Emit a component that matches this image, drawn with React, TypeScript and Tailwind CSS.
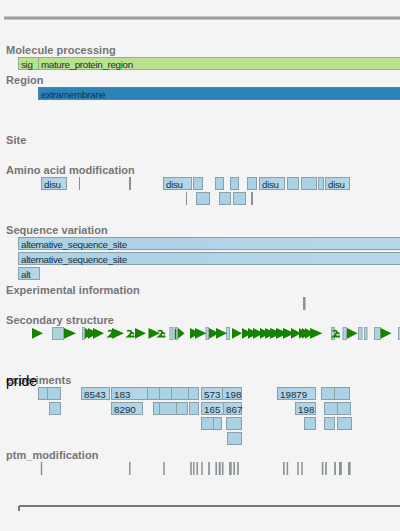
import React from "react";

// [start, end, label?] in canvas pixels
type Feature = [number, number, string?];
type Tone = "blue" | "green" | "deep";

const tones: Record<Tone, string> = {
  blue: "bg-[#abd1e5] border-[#8b9fa8]",
  green: "bg-[#b8e28d] border-[#98ac85]",
  deep: "bg-[#2c83b9] border-[#5784a0]",
};

function FeatureRow({ items, tone = "blue" }: { items: Feature[]; tone?: Tone }) {
  return (
    <div className="flex h-[15px] w-full overflow-hidden">
      {items.map(([start, end, label], i) => {
        const previous = i ? items[i - 1][1] : 0;
        const wide = end - start > 3;
        return (
          <div
            key={i}
            className={`h-[13px] shrink-0 whitespace-nowrap text-[9.8px] leading-[13px] text-[#17303c] ${/^\d/.test(label ?? "") ? "" : "tracking-[-0.32px]"} ${wide ? `border ${tones[tone]}` : "bg-[#889195]"} ${label ? "pl-[2px]" : ""} ${label && tone === "blue" ? "bg-linear-to-r from-[#abd1e5] to-[#b5d8e9]" : ""}`}
            style={{ marginLeft: start - previous, width: end - start }}
          >
            {label}
          </div>
        );
      })}
    </div>
  );
}

// [centre, width]
function TickRow({ ticks }: { ticks: [number, number][] }) {
  return (
    <svg className="block h-[15px] w-full" viewBox="0 0 400 15">
      {ticks.map(([x, w], i) => (
        <rect key={i} x={x - w / 2} y="0" width={w} height="13" fill="#889195" />
      ))}
    </svg>
  );
}

function Track({ title, children }: { title: string; children?: React.ReactNode }) {
  return (
    <section className="relative">
      <h2 className="h-[15px] whitespace-nowrap pl-[6px] text-[11px] font-bold leading-[16px] tracking-[0.05px] text-[#757575]">{title}</h2>
      {children}
    </section>
  );
}

const strands: [number, number][] = [
  [32, 43], [64, 76], [85, 93], [88, 98], [93, 104], [112, 124], [135, 146], [148.5, 160],
  [178, 184.5], [190, 200], [195, 206.5], [209, 219], [216, 227], [232, 242],
  [242, 252], [248, 258], [253, 264], [260, 270], [265, 276], [270, 283],
  [276, 289], [283, 295], [291, 301], [299, 307], [302, 310], [305, 314], [310, 322.5],
  [347, 357.5], [380.5, 391.5],
];
const helices = [108, 127, 158, 332.5];
const turns: [number, number][] = [
  [52, 64], [82, 85], [169.5, 173.5], [174.5, 178], [205.5, 209], [226, 230],
  [331, 335], [342.5, 347], [358, 362.5], [364, 367.5], [374, 381], [398, 403],
];

function SecondaryStructure() {
  return (
    <svg className="block h-[15px] w-full" viewBox="0 0 400 15">
      {turns.map(([a, b]) => (
        <rect key={a} x={a + 0.5} y="0.5" width={b - a - 1} height="12" fill="#add3dc" stroke="#91a7b4" />
      ))}
      <rect x="174.8" y="2" width="1.4" height="10" fill="#168300" />
      {strands.map(([a, b]) => (
        <path key={a} d={`M${a} 1 L${b} 6.3 L${a} 11.7 Z`} fill="#168300" />
      ))}
      {helices.map((x) => (
        <path key={x} d={`M${x} 4 Q${x + 5} 2.5 ${x + 4} 6 Q${x + 3} 8 ${x + 1} 9.5 H${x + 7.5} M${x + 4} 5 L${x + 7} 7`} fill="none" stroke="#168300" strokeWidth="1.8" />
      ))}
    </svg>
  );
}

export default function App() {
  return (
    <main
      className="flex h-[531px] w-[400px] flex-col overflow-hidden bg-[#f4f4f4]"
      style={{ fontFamily: '"Liberation Sans", Arial, sans-serif' }}
    >
      <div className="mb-[22px] ml-[4px] mt-[16px] h-[4px] shrink-0 border-y border-[#c5c5c5] bg-[#9c9c9c]" />

      <Track title="Molecule processing">
        <FeatureRow tone="green" items={[[18, 39, "sig"], [38, 410, "mature_protein_region"]]} />
      </Track>
      <Track title="Region">
        <FeatureRow tone="deep" items={[[38, 410, "extramembrane"]]} />
      </Track>
      <div className="h-[30px]" />
      <Track title="Site">
        <div className="h-[15px]" />
      </Track>
      <Track title="Amino acid modification">
        <FeatureRow
          items={[
            [41, 67, "disu"], [78.5, 80], [129, 130.5], [163, 192, "disu"], [193, 203], [215, 224], [230, 239],
            [247, 257], [259, 285, "disu"], [287, 299], [301, 317], [318, 324], [325, 350, "disu"],
          ]}
        />
        <FeatureRow items={[[185.5, 187], [196, 210], [219, 231], [233, 246], [251, 252.5]]} />
      </Track>
      <div className="h-[15px]" />
      <Track title="Sequence variation">
        <FeatureRow items={[[18, 410, "alternative_sequence_site"]]} />
        <FeatureRow items={[[18, 410, "alternative_sequence_site"]]} />
        <FeatureRow items={[[18, 40, "alt"]]} />
      </Track>
      <Track title="Experimental information">
        <TickRow ticks={[[304.3, 2.5]]} />
      </Track>
      <Track title="Secondary structure">
        <SecondaryStructure />
      </Track>
      <div className="h-[30px]" />
      <Track title="experiments">
        <span className="absolute left-[6px] top-0 text-[14px] leading-[18px] text-black">pride</span>
        <FeatureRow
          items={[
            [38, 48], [47, 61], [81, 110, "8543"], [111, 148, "183"], [147, 160], [159, 172], [171, 189],
            [188, 199], [201, 223, "573"], [222, 242, "198"], [277, 316, "19879"], [321, 335], [334, 350],
          ]}
        />
        <FeatureRow
          items={[
            [49, 61], [111, 143, "8290"], [153, 160], [159, 177], [176, 188], [189, 199], [201, 224, "165"],
            [223, 242, "867"], [295, 316, "198"], [324, 338], [337, 351],
          ]}
        />
        <FeatureRow items={[[201, 214], [213, 222], [226, 242], [304, 316], [324, 335], [337, 352]]} />
        <FeatureRow items={[[227, 242]]} />
      </Track>
      <Track title="ptm_modification">
        <TickRow
          ticks={[
            [41.5, 1.5], [129.8, 1.5], [164, 1.5], [191, 1.6], [193.8, 1.4], [197.2, 1.5], [202, 1.5],
            [209, 1.7], [216.2, 1.6], [219.7, 2], [222.7, 1.6], [230.4, 2.6], [234.2, 1.6], [238, 1.6],
            [283.8, 1.6], [287.4, 1.5], [298, 1.5], [302, 1.5], [322.6, 1.6], [326, 1.6], [335, 1.8],
            [340.4, 2.8], [349.3, 2.6],
          ]}
        />
      </Track>
      <svg className="mt-[28px] block h-[8px] w-full" viewBox="0 0 400 8">
        <path d="M19 0 H400 V2 H19 Z M18 1 H20 V6 H18 Z" fill="#777" />
      </svg>
    </main>
  );
}
